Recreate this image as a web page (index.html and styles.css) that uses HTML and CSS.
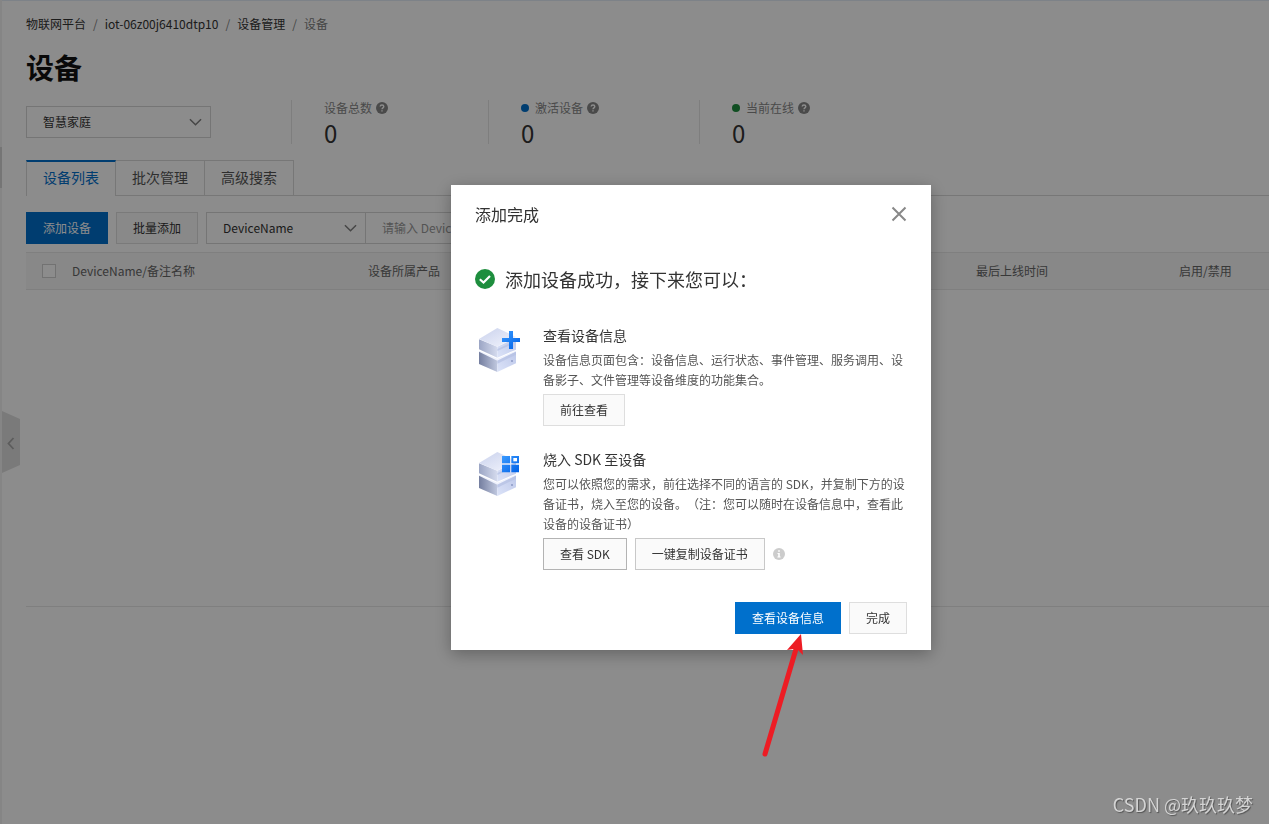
FILE: index.html
```html
<!DOCTYPE html>
<html lang="zh-CN">
<head>
<meta charset="utf-8">
<title>设备</title>
<link rel="stylesheet" href="styles.css">
</head>
<body>
<svg class="defs" aria-hidden="true">
  <defs>
    <linearGradient id="face" x1="0" y1="0" x2="1" y2="1"><stop offset="0" stop-color="#c9d1ec"/><stop offset="1" stop-color="#f3f5fd"/></linearGradient>
    <linearGradient id="left" x1="0" y1="0" x2="1" y2="0"><stop offset="0" stop-color="#9ba5c4"/><stop offset="1" stop-color="#d5dbee"/></linearGradient>
    <linearGradient id="left-dark" x1="0" y1="0" x2="1" y2="0"><stop offset="0" stop-color="#747e9f"/><stop offset="1" stop-color="#c0c8df"/></linearGradient>
    <linearGradient id="right" x1="0" y1="1" x2="1" y2="0"><stop offset="0" stop-color="#dce3f8"/><stop offset="1" stop-color="#bdc8ea"/></linearGradient>
    <linearGradient id="blue" x1="0" y1="0" x2="1" y2="1"><stop offset="0" stop-color="#3a9bff"/><stop offset="1" stop-color="#0060e6"/></linearGradient>
    <symbol id="stack" viewBox="54 51 129 135">
      <polygon points="57,122 112,146 168,122 168,128 112,156 57,128" fill="#eef1fc"/>
      <polygon points="57,125 112,152 112,186 57,162" fill="url(#left-dark)"/>
      <polygon points="112,152 168,125 168,160 112,186" fill="url(#right)"/>
      <path d="M112 152L168 125V134L112 161Z" fill="#b5c0e3" opacity=".7"/>
      <circle cx="156" cy="153" r="3" fill="#8b98c4"/>
      <polygon points="57,88 112,110 112,143 57,118" fill="url(#left)"/>
      <polygon points="112,110 168,84 168,119 112,143" fill="url(#right)"/>
      <path d="M112 117L150 100V106L112 123Z" fill="#b5c0e3" opacity=".7"/>
      <polygon points="57,87 112,54 168,81 112,110" fill="url(#face)"/>
    </symbol>
    <symbol id="help" viewBox="0 0 12 12">
      <circle cx="6" cy="6" r="6" fill="#888"/>
      <path d="M4.2 4.6C4.2 2.4 7.8 2.4 7.8 4.6C7.8 5.8 6 5.9 6 7.2M6 8.3V9.5" fill="none" stroke="#fff" stroke-width="1.4"/>
    </symbol>
    <symbol id="down" viewBox="0 0 14 8"><path d="M1 1L7 7L13 1" fill="none" stroke="#808080" stroke-width="1.6"/></symbol>
  </defs>
</svg>

<main class="page">
  <nav class="crumbs" aria-label="路径">
    <a href="#">物联网平台</a><i>/</i><a href="#">iot-06z00j6410dtp10</a><i>/</i><a href="#">设备管理</a><i>/</i><span>设备</span>
  </nav>
  <h1 class="title">设备</h1>

  <section class="summary">
    <div class="select product">
      <select aria-label="产品"><option>智慧家庭</option></select>
      <svg><use href="#down"/></svg>
    </div>
    <dl class="stats">
      <div class="stat"><dt>设备总数<svg><use href="#help"/></svg></dt><dd>0</dd></div>
      <div class="stat"><dt><b class="dot"></b>激活设备<svg><use href="#help"/></svg></dt><dd>0</dd></div>
      <div class="stat"><dt><b class="dot online"></b>当前在线<svg><use href="#help"/></svg></dt><dd>0</dd></div>
    </dl>
  </section>

  <div class="tabs">
    <button class="tab active">设备列表</button>
    <button class="tab">批次管理</button>
    <button class="tab">高级搜索</button>
  </div>

  <div class="toolbar">
    <button class="btn primary">添加设备</button>
    <button class="btn">批量添加</button>
    <div class="search">
      <div class="select field">
        <select aria-label="搜索字段"><option>DeviceName</option></select>
        <svg><use href="#down"/></svg>
      </div>
      <input class="query" type="text" placeholder="请输入 DeviceName" aria-label="请输入 DeviceName">
    </div>
  </div>

  <table class="devices">
    <colgroup><col class="c-check"><col class="c-name"><col class="c-product"><col class="c-time"><col></colgroup>
    <thead>
      <tr>
        <th><input type="checkbox" class="check" aria-label="全选"></th>
        <th>DeviceName/备注名称</th>
        <th>设备所属产品</th>
        <th>最后上线时间</th>
        <th>启用/禁用</th>
      </tr>
    </thead>
  </table>
  <div class="empty"></div>
</main>

<div class="rail"><div class="thumb"></div></div>
<button class="collapse" aria-label="收起">
  <svg viewBox="0 0 18 62"><path d="M0 0L18 8V54L0 62Z" fill="#dfdfdf"/><path d="M11.500 27L6.500 32.500L11.500 38" fill="none" stroke="#a8a8a8" stroke-width="1.800"/></svg>
</button>

<div class="overlay">
  <section class="dialog" role="dialog" aria-labelledby="dialog-title">
    <header class="dialog-head">
      <h2 id="dialog-title">添加完成</h2>
      <button class="close" aria-label="关闭"><svg viewBox="0 0 16 16"><path d="M1.500 1.500L14.500 14.500M14.500 1.500L1.500 14.500" stroke="#888" stroke-width="2"/></svg></button>
    </header>
    <p class="success">
      <svg viewBox="0 0 20 20"><circle cx="10" cy="10" r="10" fill="#1e8e3e"/><path d="M4.800 10.200L8.500 13.500L15 7" fill="none" stroke="#fff" stroke-width="2.200"/></svg>
      添加设备成功，接下来您可以：
    </p>
    <div class="items">
      <article class="item">
        <svg class="pic" viewBox="54 51 129 135"><use href="#stack" x="54" y="51" width="129" height="135"/><path d="M147 63H159V84H180V96H159V117H147V96H126V84H147Z" fill="url(#blue)"/></svg>
        <div>
          <h3>查看设备信息</h3>
          <p>设备信息页面包含：设备信息、运行状态、事件管理、服务调用、设<br>备影子、文件管理等设备维度的功能集合。</p>
          <div class="actions"><button class="btn">前往查看</button></div>
        </div>
      </article>
      <article class="item">
        <svg class="pic" viewBox="54 51 129 135"><use href="#stack" x="54" y="51" width="129" height="135"/><path d="M126 66H150V88H126ZM126 92H150V115H126ZM154 92H177V115H154ZM154 66H177V88H154Z" fill="url(#blue)"/><path d="M160 72H171V82H160Z" fill="#fff"/></svg>
        <div>
          <h3>烧入 SDK 至设备</h3>
          <p>您可以依照您的需求，前往选择不同的语言的 SDK，并复制下方的设<br>备证书，烧入至您的设备。（注：您可以随时在设备信息中，查看此<br>设备的设备证书）</p>
          <div class="actions">
            <button class="btn strong">查看 SDK</button>
            <button class="btn medium">一键复制设备证书</button>
            <svg class="info" viewBox="0 0 12 12"><circle cx="6" cy="6" r="6" fill="#ccc"/><path d="M5.200 2.200H6.800V3.700H5.200ZM4.500 5H6.800V8.500H7.600V9.500H4.400V8.500H5.200V6H4.500Z" fill="#fff"/></svg>
          </div>
        </div>
      </article>
    </div>
    <footer class="dialog-foot">
      <button class="btn primary">查看设备信息</button>
      <button class="btn">完成</button>
    </footer>
  </section>
</div>

<svg class="arrow" viewBox="0 0 44 126" aria-hidden="true"><path d="M5 121L36 16" stroke="#ed1c24" stroke-width="5" stroke-linecap="round"/><path d="M41 1L27 17L34 16L38 17L43 22Z" fill="#ed1c24"/></svg>
<div class="mark">CSDN @玖玖玖梦</div>
</body>
</html>
```
FILE: styles.css
```css
* { box-sizing: border-box; }
body {
  margin: 0;
  min-height: 100vh;
  overflow: hidden;
  background: #fff;
  color: #333;
  font: 12px/20px "Noto Sans CJK SC", "Noto Sans", sans-serif;
  text-spacing-trim: space-all;
}
h1, h2, h3, p, dl, dd { margin: 0; font-weight: 400; }
button, input, select { font: inherit; color: inherit; margin: 0; border-radius: 0; cursor: pointer; }
a { color: inherit; text-decoration: none; }
svg { display: block; flex: none; }
.defs { position: absolute; width: 0; height: 0; }

.page { padding: 13px 0 0 26px; border-top: 1px solid #e3edf8; }
.crumbs { display: flex; }
.crumbs i { margin: 0 7px; font-style: normal; color: #808080; }
.crumbs span { color: #808080; }
.title { margin-top: 14px; font-size: 28px; line-height: 38px; font-weight: 700; color: #111; }

.summary { display: flex; margin-top: 14px; }
.select { position: relative; height: 32px; border: 1px solid #d5d5d5; }
.select select { width: 100%; height: 100%; padding: 0 30px 0 16px; border: 0; background: none; appearance: none; }
.select svg { position: absolute; right: 8px; top: 11px; width: 13px; height: 8px; pointer-events: none; }
.product { width: 185px; margin: 6px 80px 0 0; }
.stats { display: flex; }
.stat { height: 44px; padding: 0 100px 0 32px; border-left: 1px solid #e5e5e5; }
.stat dt { display: flex; align-items: center; line-height: 16px; color: #888; }
.stat dt svg { width: 12px; height: 12px; margin-left: 4px; }
.stat dd { font-size: 24px; line-height: 34px; }
.dot { width: 8px; height: 8px; margin-right: 6px; border-radius: 50%; background: #0070cc; }
.dot.online { background: #1e8e3e; }

.tabs { display: flex; height: 36px; margin-top: 16px; border-bottom: 1px solid #d9d9d9; }
.tab { height: 36px; padding: 0 16px 2px; border: solid #d9d9d9; border-width: 1px 1px 1px 0; background: none; font-size: 14px; color: #555; }
.tab.active { padding-bottom: 4px; border-width: 2px 1px 0; border-top-color: #0070cc; background: #fff; color: #0070cc; }

.toolbar { display: flex; gap: 8px; margin-top: 16px; }
.btn { height: 32px; padding: 0 16px; border: 1px solid #dedede; background: #fafafa; white-space: nowrap; }
.btn.primary { padding: 0 17px; border: 0; background: #0070cc; color: #fff; }
.btn.strong { border-color: #b3b3b3; }
.btn.medium { border-color: #c8c8c8; }
.search { display: flex; }
.field { width: 160px; }
.query { width: 300px; padding: 0 16px; border: 1px solid #d5d5d5; border-left: 0; background: none; }
.query::placeholder { color: #999; }

.devices { width: 100%; height: 38px; margin-top: 8px; border-collapse: collapse; table-layout: fixed; background: #f7f7f7; border: solid #e8e8e8; border-width: 1px 0; }
.devices th { padding: 0; text-align: left; font-weight: 400; color: #666; }
.devices th:first-child { padding-left: 16px; }
.c-check { width: 46px; }
.c-name { width: 296px; }
.c-product { width: 608px; }
.c-time { width: 203px; }
.check { display: block; width: 14px; height: 14px; appearance: none; border: 1px solid #d0d0d0; background: #fff; }
.empty { height: 317px; border-bottom: 1px solid #e8e8e8; }

.rail { position: absolute; left: 0; top: 0; bottom: 0; width: 2px; background: #f3f3f3; }
.thumb { height: 41px; margin-top: 147px; background: #d5d5d5; }
.collapse { position: absolute; left: 2px; top: 411px; padding: 0; border: 0; background: none; }
.collapse svg { width: 18px; height: 62px; }

.overlay { position: fixed; inset: 0; display: flex; justify-content: center; align-items: flex-start; padding: 185px 0 0 113px; background: rgba(0, 0, 0, .45); }
.dialog { width: 480px; padding: 16px 24px; background: #fff; box-shadow: 0 4px 16px rgba(0, 0, 0, .3); }
.dialog-head { display: flex; align-items: flex-end; justify-content: space-between; height: 24px; }
.dialog-head h2 { font-size: 16px; line-height: 26px; }
.dialog-head { height: 26px; align-items: center; }
.dialog-head h2 { line-height: 24px; }
.close { padding: 0; border: 0; background: none; }
.close svg { width: 16px; height: 16px; }
.success { display: flex; align-items: center; gap: 10px; margin-top: 38px; font-size: 18px; line-height: 28px; }
.success svg { width: 20px; height: 20px; }
.items { display: grid; gap: 22px; margin-top: 31px; }
.item { display: flex; gap: 22px; padding-left: 3px; }
.pic { width: 43px; height: 45px; margin-top: 3px; }
.item h3 { font-size: 14px; line-height: 22px; }
.item p { margin-top: 4px; white-space: nowrap; color: #555; }
.actions { display: flex; align-items: center; gap: 8px; margin-top: 4px; }
.info { width: 12px; height: 12px; }
.dialog-foot { display: flex; justify-content: flex-end; gap: 8px; margin-top: 32px; }

.arrow { position: absolute; left: 760px; top: 633px; width: 44px; height: 126px; }
.mark { position: absolute; right: 16px; bottom: 10px; font-size: 18px; color: #d4d4d4; text-shadow: 1px 1px 1px #555; }
```
